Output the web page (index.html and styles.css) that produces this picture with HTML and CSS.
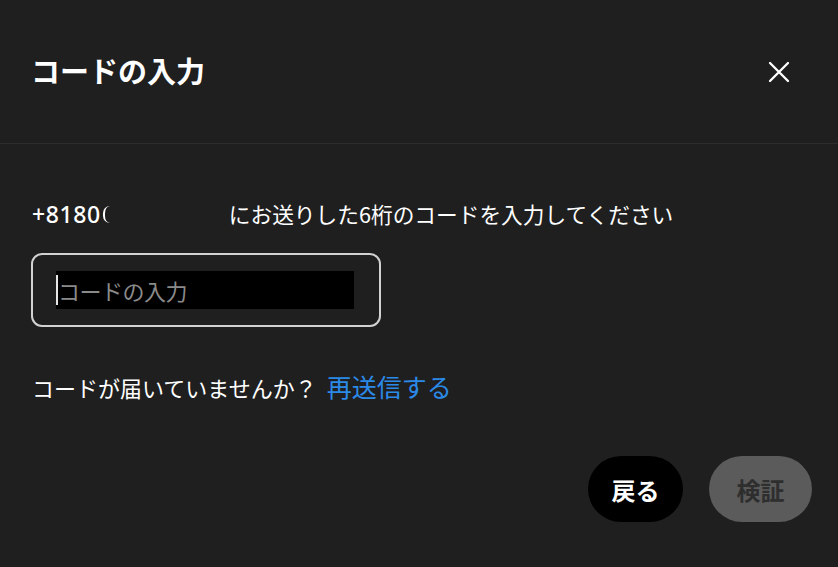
FILE: index.html
```html
<!DOCTYPE html>
<html lang="ja">
<head>
<meta charset="utf-8">
<link rel="stylesheet" href="styles.css">
</head>
<body>
<div class="dialog">
  <header class="head">
    <h1 class="title">コードの入力</h1>
    <button class="close" aria-label="閉じる">
      <svg width="24" height="24" viewBox="0 0 24 24"><path d="M2 2 L22 22 M22 2 L2 22" stroke="#fff" stroke-width="2.6" stroke-linecap="round" fill="none"/></svg>
    </button>
  </header>
  <main class="body">
    <p class="msg"><span class="phone">+8180</span><span class="cut"></span><span class="redact"></span>にお送りした6桁のコードを入力してください</p>
    <div class="field">
      <div class="inner"><span class="caret"></span><span class="ph">コードの入力</span></div>
    </div>
    <p class="resend">コードが届いていませんか？<a class="link">再送信する</a></p>
    <div class="actions">
      <button class="btn back">戻る</button>
      <button class="btn verify">検証</button>
    </div>
  </main>
</div>
</body>
</html>
```
FILE: styles.css
```css
html, body {
  margin: 0;
  padding: 0;
  background: #1f1f1f;
}
body {
  width: 838px;
  height: 567px;
  overflow: hidden;
  font-family: "Noto Sans CJK JP", "Noto Sans", sans-serif;
  color: #ffffff;
}
.dialog {
  display: flex;
  flex-direction: column;
}
.head {
  height: 144px;
  box-sizing: border-box;
  border-bottom: 1px solid #2d2d2d;
  display: flex;
  align-items: center;
  justify-content: space-between;
  padding: 0 47px 0 31px;
}
.title {
  margin: 0;
  font-size: 29px;
  font-weight: 700;
  letter-spacing: 0;
  line-height: 1;
  padding-bottom: 2px;
}
.close {
  background: none;
  border: 0;
  padding: 0;
  width: 24px;
  height: 24px;
  display: flex;
  transform: scale(0.9);
}
.body {
  padding: 0 26px 0 32px;
  display: flex;
  flex-direction: column;
}
.msg {
  margin: 55px 0 0;
  font-size: 21.7px;
  line-height: 30px;
  display: flex;
  align-items: center;
  white-space: nowrap;
}
.phone {
  font-family: "Noto Sans", sans-serif;
  font-size: 23px;
  font-weight: 500;
  letter-spacing: 0.6px;
}
.cut {
  display: inline-block;
  width: 12px;
  height: 17px;
  margin-left: 2px;
  box-sizing: border-box;
  border-left: 2.5px solid #fff;
  border-radius: 7px 0 0 7px;
  margin-top: 1px;
}
.redact {
  display: inline-block;
  height: 28px;
  flex: 0 0 auto;
  width: 114px;
}
.field {
  margin-top: 24px;
  margin-left: -1px;
  width: 350px;
  height: 74px;
  box-sizing: border-box;
  border: 2px solid #d2d2d2;
  border-radius: 11px;
  display: flex;
  align-items: center;
  padding-left: 23px;
}
.inner {
  width: 298px;
  height: 38px;
  background: #000;
  display: flex;
  align-items: center;
}
.caret {
  width: 2px;
  height: 30px;
  background: #e6e6e6;
}
.ph {
  color: #8a8a8a;
  font-size: 22px;
  line-height: 1;
  letter-spacing: -0.5px;
}
.resend {
  margin: 44px 0 0;
  font-size: 22px;
  line-height: 30px;
  white-space: nowrap;
}
.link {
  color: #2b8ae8;
  font-size: 25px;
  margin-left: 10px;
}
.actions {
  margin-top: 54px;
  display: flex;
  justify-content: flex-end;
  gap: 26px;
}
.btn {
  height: 66px;
  border: 0;
  border-radius: 33px;
  font-family: "Noto Sans CJK JP", sans-serif;
  font-size: 24px;
  font-weight: 700;
  padding: 0;
}
.back {
  width: 95px;
  background: #000;
  color: #fff;
}
.verify {
  width: 103px;
  background: #5b5b5b;
  color: #2e2e2e;
}
```
